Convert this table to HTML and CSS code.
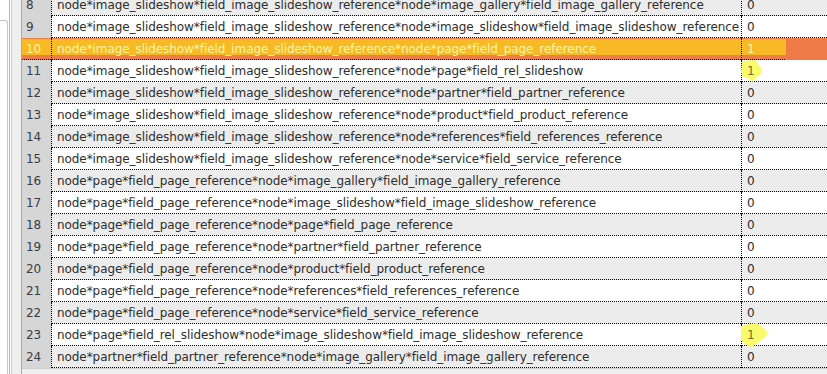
FILE: index.html
```html
<!DOCTYPE html>
<html>
<head>
<meta charset="utf-8">
<link rel="stylesheet" href="styles.css">
</head>
<body>
<div class="side"><div class="side-box"></div></div>
<div class="gutter"></div>
<div class="sheet">
  <div class="rows">
    <div class="row even"><div class="rh">8</div><div class="cell">node*image_slideshow*field_image_slideshow_reference*node*image_gallery*field_image_gallery_reference</div><div class="val"><span class="v">0</span></div></div>
    <div class="row odd"><div class="rh">9</div><div class="cell">node*image_slideshow*field_image_slideshow_reference*node*image_slideshow*field_image_slideshow_reference</div><div class="val"><span class="v">0</span></div></div>
    <div class="row marked"><div class="rh">10</div><div class="cell">node*image_slideshow*field_image_slideshow_reference*node*page*field_page_reference</div><div class="val"><span class="v">1</span></div></div>
    <div class="row odd"><div class="rh">11</div><div class="cell">node*image_slideshow*field_image_slideshow_reference*node*page*field_rel_slideshow</div><div class="val"><svg class="blob blob-a" width="24" height="24" viewBox="0 0 24 24"><path d="M1 1 L14 0 L17 4 L21 9 L20 14 L16 17 L11 22 L7 18 L2 17 L0 12 L1 6 Z" fill="#f9fb6a"/></svg><span class="v">1</span></div></div>
    <div class="row even"><div class="rh">12</div><div class="cell">node*image_slideshow*field_image_slideshow_reference*node*partner*field_partner_reference</div><div class="val"><span class="v">0</span></div></div>
    <div class="row odd"><div class="rh">13</div><div class="cell">node*image_slideshow*field_image_slideshow_reference*node*product*field_product_reference</div><div class="val"><span class="v">0</span></div></div>
    <div class="row even"><div class="rh">14</div><div class="cell">node*image_slideshow*field_image_slideshow_reference*node*references*field_references_reference</div><div class="val"><span class="v">0</span></div></div>
    <div class="row odd"><div class="rh">15</div><div class="cell">node*image_slideshow*field_image_slideshow_reference*node*service*field_service_reference</div><div class="val"><span class="v">0</span></div></div>
    <div class="row even"><div class="rh">16</div><div class="cell">node*page*field_page_reference*node*image_gallery*field_image_gallery_reference</div><div class="val"><span class="v">0</span></div></div>
    <div class="row odd"><div class="rh">17</div><div class="cell">node*page*field_page_reference*node*image_slideshow*field_image_slideshow_reference</div><div class="val"><span class="v">0</span></div></div>
    <div class="row even"><div class="rh">18</div><div class="cell">node*page*field_page_reference*node*page*field_page_reference</div><div class="val"><span class="v">0</span></div></div>
    <div class="row odd"><div class="rh">19</div><div class="cell">node*page*field_page_reference*node*partner*field_partner_reference</div><div class="val"><span class="v">0</span></div></div>
    <div class="row even"><div class="rh">20</div><div class="cell">node*page*field_page_reference*node*product*field_product_reference</div><div class="val"><span class="v">0</span></div></div>
    <div class="row odd"><div class="rh">21</div><div class="cell">node*page*field_page_reference*node*references*field_references_reference</div><div class="val"><span class="v">0</span></div></div>
    <div class="row even"><div class="rh">22</div><div class="cell">node*page*field_page_reference*node*service*field_service_reference</div><div class="val"><span class="v">0</span></div></div>
    <div class="row odd"><div class="rh">23</div><div class="cell">node*page*field_rel_slideshow*node*image_slideshow*field_image_slideshow_reference</div><div class="val"><svg class="blob blob-b" width="28" height="26" viewBox="0 0 28 26"><path d="M0 3 L8 1 L16 0 L21 4 L27 9 L25 13 L20 17 L14 22 L10 24 L3 21 L0 17 Z" fill="#f9fb6a"/></svg><span class="v">1</span></div></div>
    <div class="row even"><div class="rh">24</div><div class="cell">node*partner*field_partner_reference*node*image_gallery*field_image_gallery_reference</div><div class="val"><span class="v">0</span></div></div>
  </div>
  <div class="foot"></div>
</div>
</body>
</html>
```
FILE: styles.css
```css
html, body {
  margin: 0;
  padding: 0;
  height: 374px;
  overflow: hidden;
}
body {
  display: flex;
  background: #ffffff;
  font-family: "DejaVu Sans", "Liberation Sans", sans-serif;
  font-size: 12px;
  letter-spacing: -0.07px;
  color: #2e2e2e;
}
.side {
  width: 9px;
  flex: none;
  background: #ffffff;
}
.side-box {
  margin-top: 20px;
  width: 7px;
  height: 360px;
  border-top: 1px solid #c6c6c6;
  border-right: 1px solid #c6c6c6;
  border-top-right-radius: 3px;
}
.gutter {
  width: 13px;
  flex: none;
  border-left: 1px solid #b9b9b9;
  box-sizing: border-box;
  background: linear-gradient(to right, #ffffff 0 1px, #cdcdcd 1px 2px, #efefef 2px);
  border-right: 1px solid #a9a9a9;
}
.sheet {
  flex: 1;
  display: flex;
  flex-direction: column;
  min-width: 0;
}
.rows {
  margin-top: -6px;
  display: flex;
  flex-direction: column;
}
.row {
  display: grid;
  grid-template-columns: 30px 690px 1fr;
  height: 22px;
  box-sizing: border-box;
  border-bottom: 1px dotted #000;
  line-height: 22px;
  white-space: nowrap;
}
.even { background: #ececec; }
.odd { background: #ffffff; }
.rh {
  background: #d6d6d6;
  border-right: 1px dotted #000;
  padding-left: 4px;
  color: #3a3d44;
}
.cell {
  border-right: 1px dotted #000;
  padding-left: 5px;
  overflow: hidden;
}
.val {
  position: relative;
  padding-left: 5px;
}
.v {
  position: relative;
}
.blob {
  position: absolute;
  left: -1px;
  top: 0;
}
.blob-b {
  top: -1px;
}
.blob-a + .v, .blob-b + .v {
  color: #6c7030;
}
.marked {
  background: linear-gradient(to bottom, #ef7d46 0 1px, #f7b924 1px calc(100% - 4px), #ef7d46 calc(100% - 4px));
  color: #fff6a4;
}
.marked .rh {
  background: transparent;
  color: #fff6a4;
}
.marked .val {
  background: linear-gradient(to right, transparent 0 44px, #ef7b48 44px);
}
.foot {
  flex: 1;
  border-top: 1px solid #cfcfcf;
  background: #efefef;
}
```
